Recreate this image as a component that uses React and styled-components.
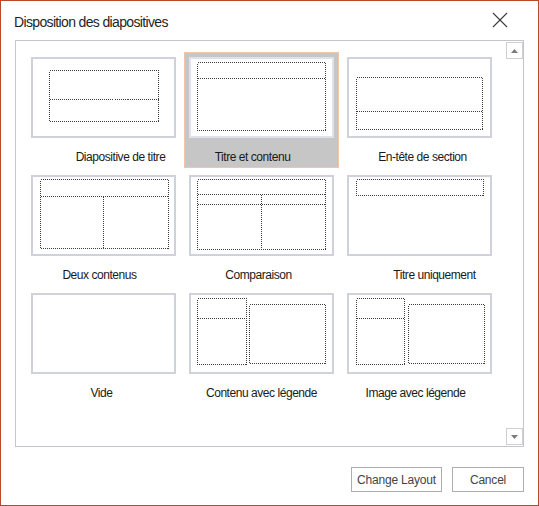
import React from "react";
import styled, { createGlobalStyle } from "styled-components";

const GlobalStyle = createGlobalStyle`
    body {
        margin: 0;
        background: #ffffff;
        font-family: "Liberation Sans", Arial, sans-serif;
    }
`;

const Dialog = styled.div`
    width: 539px;
    height: 506px;
    box-sizing: border-box;
    border: 1px solid #b8472b;
    background: #ffffff;
    display: flex;
    flex-direction: column;
`;

const Header = styled.div`
    height: 39px;
    box-sizing: border-box;
    padding: 13px 30px 0 13px;
    display: flex;
    justify-content: space-between;
    align-items: flex-start;
`;

const Title = styled.div`
    font-size: 14px;
    line-height: 16px;
    letter-spacing: -0.65px;
    color: #1f1f1f;
`;

const CloseIcon = styled.svg`
    margin-top: -2px;
    display: block;
`;

const ListBox = styled.div`
    margin: 0 14px;
    height: 407px;
    box-sizing: border-box;
    border: 1px solid #c3c6cc;
    display: flex;
`;

const Grid = styled.div`
    flex: 1;
    display: grid;
    grid-template-columns: repeat(3, 155px);
    grid-auto-rows: 116px;
    column-gap: 3px;
    row-gap: 2px;
    padding: 11px 0 0 10px;
    align-content: start;
`;

const Cell = styled.div`
    box-sizing: border-box;
    border: 1px solid ${(p) => (p.$selected ? "#f4c4a6" : "transparent")};
    background: ${(p) => (p.$selected ? "#c6c6c6" : "transparent")};
    padding: 4px 4px 3px;
    display: flex;
    flex-direction: column;
    align-items: center;
`;

const Thumb = styled.div`
    width: 145px;
    height: 81px;
    box-sizing: border-box;
    border: 2px solid ${(p) => (p.$selected ? "#dfe2e9" : "#cfd2da")};
    background: #ffffff;
`;

const Label = styled.div`
    margin-top: 12px;
    width: 100%;
    box-sizing: border-box;
    text-align: center;
    font-size: 12px;
    line-height: 14px;
    letter-spacing: -0.45px;
    color: #1a1a1a;
    white-space: nowrap;
    padding-left: ${(p) => (p.$shift > 0 ? p.$shift * 2 : 0)}px;
    padding-right: ${(p) => (p.$shift < 0 ? -p.$shift * 2 : 0)}px;
`;

const ScrollBar = styled.div`
    width: 17px;
    padding: 1px 0;
    display: flex;
    flex-direction: column;
    justify-content: space-between;
`;

const ScrollButton = styled.div`
    width: 17px;
    height: 17px;
    box-sizing: border-box;
    border: 1px solid #cfcfcf;
    display: flex;
    align-items: center;
    justify-content: center;
`;

const Footer = styled.div`
    display: flex;
    justify-content: flex-end;
    gap: 10px;
    padding: 20px 14px 0 0;
`;

const Button = styled.button`
    width: ${(p) => p.$width}px;
    height: 25px;
    box-sizing: border-box;
    border: 1px solid #adadad;
    background: #ffffff;
    padding: 0;
    font-family: "Liberation Sans", Arial, sans-serif;
    font-size: 12px;
    letter-spacing: -0.2px;
    color: #444444;
`;

const layouts = [
    {
        label: "Diapositive de titre",
        shift: 17,
        rects: [[16, 11, 109, 51]],
        lines: [[16, 40, 125, 40]],
    },
    {
        label: "Titre et contenu",
        shift: -9,
        selected: true,
        rects: [[6, 3, 128, 68]],
        lines: [[6, 19, 134, 19]],
    },
    {
        label: "En-tête de section",
        shift: 3,
        rects: [[7, 18, 126, 52]],
        lines: [[7, 52, 133, 52]],
    },
    {
        label: "Deux contenus",
        shift: -4,
        rects: [[7, 2, 128, 69]],
        lines: [
            [7, 19, 135, 19],
            [70, 19, 70, 71],
        ],
    },
    {
        label: "Comparaison",
        shift: -3,
        rects: [[6, 2, 128, 70]],
        lines: [
            [6, 17, 134, 17],
            [6, 27, 134, 27],
            [70, 17, 70, 72],
        ],
    },
    {
        label: "Titre uniquement",
        shift: 15,
        rects: [[7, 2, 127, 16]],
        lines: [],
    },
    { label: "Vide", shift: -2, rects: [], lines: [] },
    {
        label: "Contenu avec légende",
        shift: 0,
        rects: [
            [6, 3, 49, 66],
            [58, 9, 76, 59],
        ],
        lines: [[6, 23, 55, 23]],
    },
    {
        label: "Image avec légende",
        shift: -4,
        rects: [
            [7, 3, 48, 66],
            [59, 9, 76, 59],
        ],
        lines: [[7, 23, 55, 23]],
    },
];

const dots = {
    fill: "none",
    stroke: "#3a3a3a",
    strokeWidth: 1,
    strokeDasharray: "1 1",
    shapeRendering: "crispEdges",
};

const Placeholders = ({ rects, lines }) => (
    <svg width="141" height="77" style={{ display: "block" }}>
        {rects.map(([x, y, w, h], i) => (
            <rect key={`r${i}`} x={x + 0.5} y={y + 0.5} width={w} height={h} {...dots} />
        ))}
        {lines.map(([x1, y1, x2, y2], i) => (
            <line key={`l${i}`} x1={x1 + 0.5} y1={y1 + 0.5} x2={x2 + 0.5} y2={y2 + 0.5} {...dots} />
        ))}
    </svg>
);

const Arrow = ({ up }) => (
    <svg width="7" height="4" style={{ display: "block" }}>
        <polygon points={up ? "0,4 7,4 3.5,0" : "0,0 7,0 3.5,4"} fill="#7a7a7a" />
    </svg>
);

const App = () => {
    return (
        <>
            <GlobalStyle />
            <Dialog>
                <Header>
                    <Title>Disposition des diapositives</Title>
                    <CloseIcon width="16" height="16">
                        <line x1="1" y1="1" x2="15" y2="15" stroke="#3c3c3c" strokeWidth="1.1" />
                        <line x1="15" y1="1" x2="1" y2="15" stroke="#3c3c3c" strokeWidth="1.1" />
                    </CloseIcon>
                </Header>
                <ListBox>
                    <Grid>
                        {layouts.map((l) => (
                            <Cell key={l.label} $selected={l.selected}>
                                <Thumb $selected={l.selected}>
                                    <Placeholders rects={l.rects} lines={l.lines} />
                                </Thumb>
                                <Label $shift={l.shift}>{l.label}</Label>
                            </Cell>
                        ))}
                    </Grid>
                    <ScrollBar>
                        <ScrollButton>
                            <Arrow up />
                        </ScrollButton>
                        <ScrollButton>
                            <Arrow />
                        </ScrollButton>
                    </ScrollBar>
                </ListBox>
                <Footer>
                    <Button $width={91}>Change Layout</Button>
                    <Button $width={72}>Cancel</Button>
                </Footer>
            </Dialog>
        </>
    );
};

export default App;
